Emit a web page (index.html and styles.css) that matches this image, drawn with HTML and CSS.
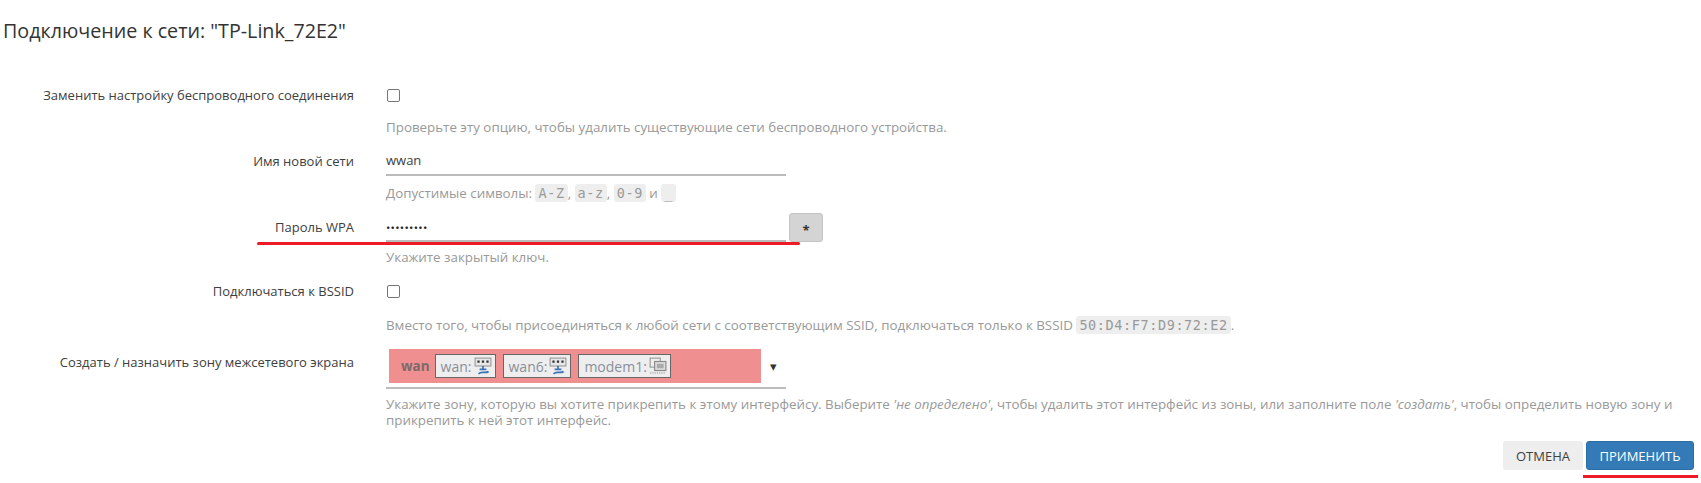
FILE: index.html
```html
<!DOCTYPE html>
<html lang="ru">
<head>
    <meta charset="UTF-8">
    <title>Подключение к сети</title>
    <link rel="stylesheet" href="styles.css">
</head>
<body>
    <h2 class="title">Подключение к сети: "TP-Link_72E2"</h2>

    <form class="form">
        <div class="row row-first">
            <label class="row-label">Заменить настройку беспроводного соединения</label>
            <div class="row-field">
                <div class="control"><span class="check"></span></div>
                <div class="hint">Проверьте эту опцию, чтобы удалить существующие сети беспроводного устройства.</div>
            </div>
        </div>

        <div class="row">
            <label class="row-label">Имя новой сети</label>
            <div class="row-field">
                <div class="control input">wwan</div>
                <div class="hint hint-close">Допустимые символы: <code>A-Z</code>, <code>a-z</code>, <code>0-9</code> и <code>_</code></div>
            </div>
        </div>

        <div class="row">
            <label class="row-label">Пароль WPA</label>
            <div class="row-field">
                <div class="password">
                    <div class="control input dots">•••••••••</div>
                    <button type="button" class="reveal">*</button>
                    <span class="mark mark-password"></span>
                </div>
                <div class="hint hint-tight">Укажите закрытый ключ.</div>
            </div>
        </div>

        <div class="row">
            <label class="row-label">Подключаться к BSSID</label>
            <div class="row-field">
                <div class="control"><span class="check"></span></div>
                <div class="hint hint-far">Вместо того, чтобы присоединяться к любой сети с соответствующим SSID, подключаться только к BSSID <code>50:D4:F7:D9:72:E2</code>.</div>
            </div>
        </div>

        <div class="row row-zone">
            <label class="row-label">Создать / назначить зону межсетевого экрана</label>
            <div class="row-field">
                <div class="zone-select">
                    <div class="zone">
                        <b>wan</b>
                        <span class="iface">wan:
                            <svg class="ico" viewBox="0 0 16 16"><rect x="1" y="1" width="14" height="7" fill="#e8e8e8" stroke="#9a9a9a"/><path d="M3 3h2v2H3zM7 3h2v2H7zM11 3h2v2h-2z" fill="#333"/><path d="M8 8v3M5 11h6M4 15c3-3 5 0 9-2" stroke="#3a73b8" stroke-width="1.5" fill="none"/></svg>
                        </span>
                        <span class="iface">wan6:
                            <svg class="ico" viewBox="0 0 16 16"><rect x="1" y="1" width="14" height="7" fill="#e8e8e8" stroke="#9a9a9a"/><path d="M3 3h2v2H3zM7 3h2v2H7zM11 3h2v2h-2z" fill="#333"/><path d="M8 8v3M5 11h6M4 15c3-3 5 0 9-2" stroke="#3a73b8" stroke-width="1.5" fill="none"/></svg>
                        </span>
                        <span class="iface">modem1:
                            <svg class="ico" viewBox="0 0 16 16"><rect x="1" y="1" width="9" height="8" fill="#eee" stroke="#999"/><rect x="5" y="4" width="10" height="8" fill="#ddd" stroke="#888"/><rect x="7" y="6" width="6" height="4" fill="#aaa"/><path d="M1 14h14" stroke="#bbb" stroke-width="2" stroke-dasharray="1 1"/></svg>
                        </span>
                    </div>
                    <span class="arrow">▾</span>
                </div>
                <div class="hint hint-zone">Укажите зону, которую вы хотите прикрепить к этому интерфейсу. Выберите <em>'не определено'</em>, чтобы удалить этот интерфейс из зоны, или заполните поле <em>'создать'</em>, чтобы определить новую зону и прикрепить к ней этот интерфейс.</div>
            </div>
        </div>

        <div class="actions">
            <button type="button" class="btn">ОТМЕНА</button>
            <div class="apply-wrap">
                <button type="button" class="btn btn-apply">ПРИМЕНИТЬ</button>
            </div>
        </div>
    </form>
</body>
</html>
```

FILE: styles.css
```css
* {
    box-sizing: border-box;
}
body {
    margin: 0;
    background-color: #fff;
    color: #404040;
    font-family: "Open Sans", sans-serif;
    font-size: 13px;
}
.title {
    margin: 0;
    padding: 18px 0 0 3px;
    height: 80px;
    font-size: 19.7px;
    line-height: 26px;
    font-weight: 400;
    color: #333;
}
.row {
    display: grid;
    grid-template-columns: 354px 1fr;
    column-gap: 32px;
    margin-bottom: 11px;
}
.row-label {
    text-align: right;
    line-height: 30px;
    color: #404040;
}
.row-zone {
    margin-top: 16px;
    margin-bottom: 13px;
}
.row-zone .row-label {
    line-height: 27px;
}
.control {
    display: flex;
    align-items: center;
    width: 400px;
    height: 30px;
    line-height: 28px;
}
.input {
    padding-left: 0;
    border-bottom: 2px solid #bbb;
    color: #404040;
}
.dots {
    padding-top: 3px;
    font-size: 11.5px;
    letter-spacing: 0.3px;
    color: #222;
}
.check {
    display: block;
    width: 13px;
    height: 13px;
    margin-left: 1px;
    border: 1px solid #767676;
    border-radius: 2px;
    background-color: #fff;
}
.hint {
    margin-top: 9px;
    width: 1290px;
    font-size: 13.35px;
    line-height: 16px;
    color: #999;
}
.hint-close {
    margin-top: 9px;
}
.hint-tight {
    margin-top: 7px;
}
.hint-far {
    margin-top: 11px;
}
.hint-zone {
    margin-top: 7px;
}
code {
    padding: 1px 3px;
    border-radius: 3px;
    background-color: #eee;
    font-family: "DejaVu Sans Mono", monospace;
    font-size: 13.5px;
    letter-spacing: 0.6px;
    color: #999;
}
.password {
    position: relative;
    display: flex;
    align-items: flex-end;
    gap: 3px;
}
.reveal {
    width: 34px;
    height: 29px;
    padding: 5px 0 0;
    border: 1px solid #c4c4c4;
    border-radius: 3px;
    background-color: #d4d4d4;
    font-family: inherit;
    font-size: 13px;
    font-weight: 700;
    color: #333;
}
.mark {
    position: absolute;
    height: 3px;
    background-color: #ed1c24;
    border-radius: 2px;
}
.mark-password {
    left: -129px;
    bottom: -3px;
    width: 543px;
}
.zone-select {
    position: relative;
    display: flex;
    align-items: center;
    width: 400px;
    height: 40px;
    padding: 0 0 4px 3px;
    border-bottom: 2px solid #bbb;
}
.zone {
    display: flex;
    flex: none;
    align-items: center;
    gap: 7px;
    width: 372px;
    height: 34px;
    padding-left: 12px;
    background-color: #f08f8f;
    color: #777;
    font-size: 13.5px;
}
.zone b {
    margin-right: -2px;
    color: #7c6a6a;
}
.iface {
    display: flex;
    align-items: center;
    gap: 2px;
    height: 24px;
    padding: 0 3px 0 5px;
    border: 1px solid #666;
    background-color: #eee;
    color: #8a8f99;
    font-size: 14px;
}
.ico {
    width: 18px;
    height: 18px;
}
.arrow {
    margin-left: 9px;
    font-size: 13px;
    color: #333;
}
.actions {
    display: flex;
    justify-content: flex-end;
    align-items: flex-start;
    padding-right: 3px;
}
.btn {
    height: 29px;
    padding: 0 13px;
    border: 0;
    border-radius: 3px;
    background-color: #eee;
    font-family: inherit;
    font-size: 13px;
    color: #404040;
}
.apply-wrap {
    display: flex;
    width: 115px;
    padding: 0 4px 5px 3px;
    border-bottom: 3px solid #ed1c24;
}
.btn-apply {
    width: 108px;
    padding: 0;
    border: 1px solid #2e6da4;
    background-color: #337ab7;
    color: #fff;
}
```
